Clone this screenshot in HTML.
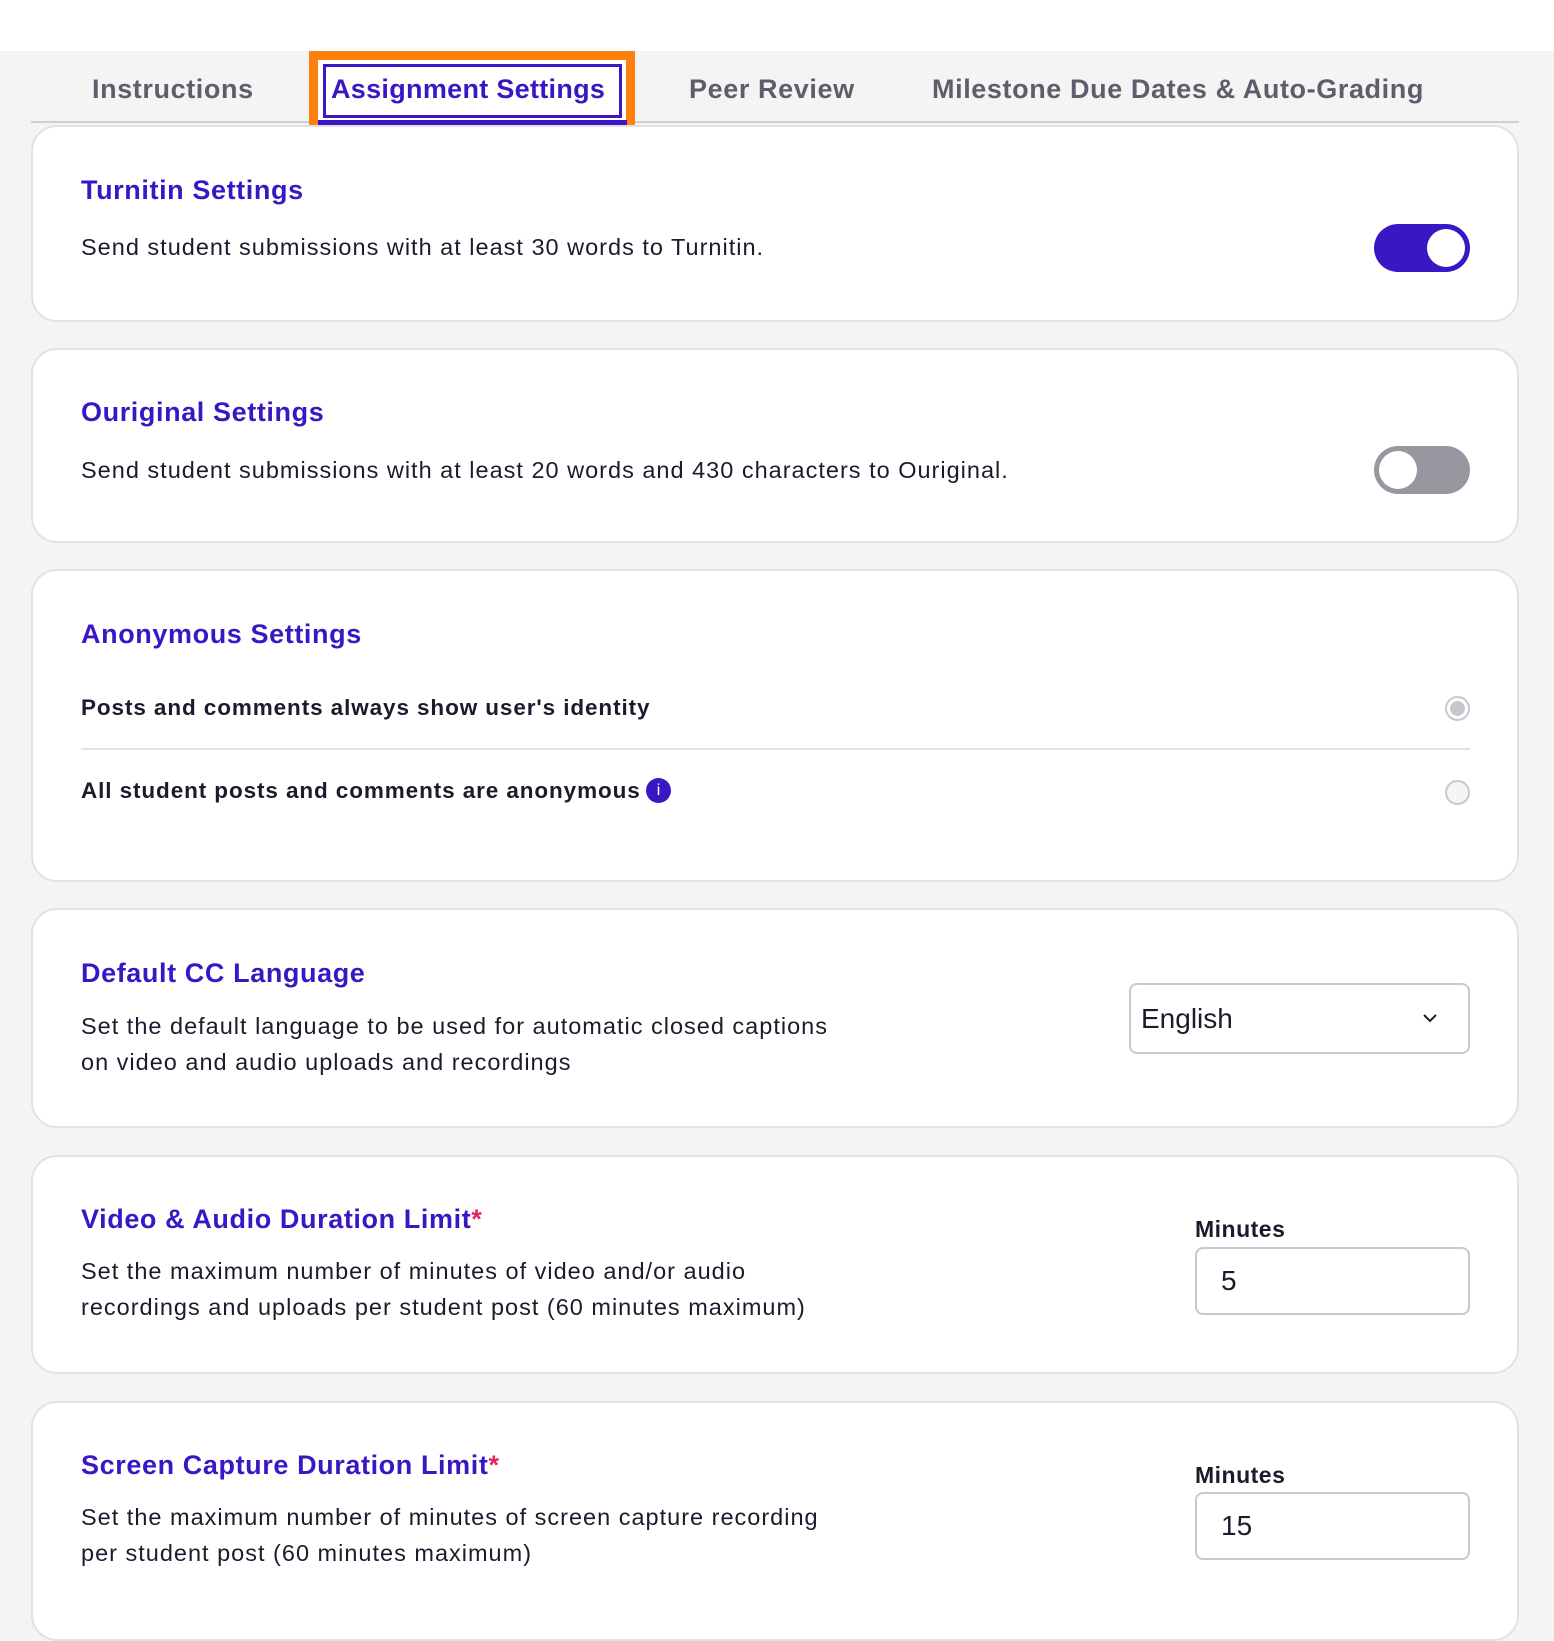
<!DOCTYPE html>
<html><head><meta charset="utf-8"><style>
*{box-sizing:border-box;margin:0;padding:0}
body{width:1554px;height:1622px;background:#f4f4f5;position:relative;overflow:hidden;font-family:"Liberation Sans",Arial,sans-serif;color:#1c1b2b}
.top{position:absolute;left:0;top:0;width:1554px;height:51px;background:#fff}
.tabline{position:absolute;left:31px;top:121px;width:1488px;height:2px;background:#cfced6}
.tab{position:absolute;top:74px;font-size:27px;font-weight:bold;color:#5f5d6b;white-space:nowrap;letter-spacing:0.6px}
.orange{position:absolute;left:309px;top:51px;width:326px;height:87px;border:9px solid #ff7f0e;background:#fff}
.blue{position:absolute;left:323px;top:64px;width:299px;height:54px;border:3px solid #3a17c4}
.uline{position:absolute;left:318px;top:120px;width:309px;height:5px;background:#3a17c4}
.card{position:absolute;left:31px;width:1488px;background:#fff;border:2px solid #e2e1e6;border-radius:26px}
.t{position:absolute;left:81px;font-size:27px;font-weight:bold;color:#3a17c4;white-space:nowrap;letter-spacing:0.6px}
.b{position:absolute;left:81px;font-size:23.5px;letter-spacing:1px;color:#1c1b2b;white-space:nowrap;line-height:36px}
.bb{position:absolute;left:81px;font-size:22.5px;font-weight:bold;color:#1c1b2b;white-space:nowrap;letter-spacing:0.9px}
.tog{position:absolute;left:1374px;width:96px;height:48px;border-radius:24px}
.knob{position:absolute;top:5px;width:38px;height:38px;border-radius:50%;background:#fff}
.radio{position:absolute;left:1445px;width:25px;height:25px;border-radius:50%;border:2px solid #c9c8cf;background:#f5f5f6}
.inp{position:absolute;border:2px solid #c9c8cf;border-radius:8px;background:#fff;font-size:28px;color:#1c1b2b;padding-left:24px}
.min{position:absolute;left:1195px;font-size:23px;font-weight:bold;color:#1c1b2b;letter-spacing:0.5px}
.ast{color:#e0245e}
</style></head><body>
<div class="top"></div>
<div class="tabline"></div>
<div class="tab" style="left:92px">Instructions</div>
<div class="orange"></div>
<div class="blue"></div>
<div class="uline"></div>
<div class="tab" style="left:331px;color:#3a17c4;letter-spacing:0.3px">Assignment Settings</div>
<div class="tab" style="left:689px">Peer Review</div>
<div class="tab" style="left:932px">Milestone Due Dates &amp; Auto-Grading</div>

<div class="card" style="top:125px;height:197px"></div>
<div class="t" style="top:175px">Turnitin Settings</div>
<div class="b" style="top:229px">Send student submissions with at least 30 words to Turnitin.</div>
<div class="tog" style="top:224px;background:#3a17c4"><div class="knob" style="left:53px"></div></div>

<div class="card" style="top:348px;height:195px"></div>
<div class="t" style="top:397px">Ouriginal Settings</div>
<div class="b" style="top:452px">Send student submissions with at least 20 words and 430 characters to Ouriginal.</div>
<div class="tog" style="top:446px;background:#98969f"><div class="knob" style="left:5px"></div></div>

<div class="card" style="top:569px;height:313px"></div>
<div class="t" style="top:619px">Anonymous Settings</div>
<div class="bb" style="top:695px">Posts and comments always show user's identity</div>
<div class="radio" style="top:696px;border-color:#c9c8cf;background:#fff"><div style="position:absolute;left:3px;top:3px;width:15px;height:15px;border-radius:50%;background:#c8c7cc"></div></div>
<div style="position:absolute;left:81px;top:748px;width:1389px;height:2px;background:#e2e1e6"></div>
<div class="bb" style="top:778px">All student posts and comments are anonymous</div>
<div style="position:absolute;left:646px;top:778px;width:25px;height:25px;border-radius:50%;background:#3a17c4;color:#fff;font-size:16px;text-align:center;line-height:25px">i</div>
<div class="radio" style="top:780px"></div>

<div class="card" style="top:908px;height:220px"></div>
<div class="t" style="top:958px">Default CC Language</div>
<div class="b" style="top:1008px">Set the default language to be used for automatic closed captions<br>on video and audio uploads and recordings</div>
<div class="inp" style="left:1129px;top:983px;width:341px;height:71px;line-height:67px;padding-left:10px">English
<svg style="position:absolute;right:30px;top:28px" width="16" height="10" viewBox="0 0 16 10"><path d="M2 2l6 6 6-6" fill="none" stroke="#1c1b2b" stroke-width="2"/></svg></div>

<div class="card" style="top:1155px;height:219px"></div>
<div class="t" style="top:1204px">Video &amp; Audio Duration Limit<span class="ast">*</span></div>
<div class="b" style="top:1253px">Set the maximum number of minutes of video and/or audio<br>recordings and uploads per student post (60 minutes maximum)</div>
<div class="min" style="top:1216px">Minutes</div>
<div class="inp" style="left:1195px;top:1247px;width:275px;height:68px;line-height:64px">5</div>

<div class="card" style="top:1401px;height:240px"></div>
<div class="t" style="top:1450px">Screen Capture Duration Limit<span class="ast">*</span></div>
<div class="b" style="top:1499px">Set the maximum number of minutes of screen capture recording<br>per student post (60 minutes maximum)</div>
<div class="min" style="top:1462px">Minutes</div>
<div class="inp" style="left:1195px;top:1492px;width:275px;height:68px;line-height:64px">15</div>
</body></html>
